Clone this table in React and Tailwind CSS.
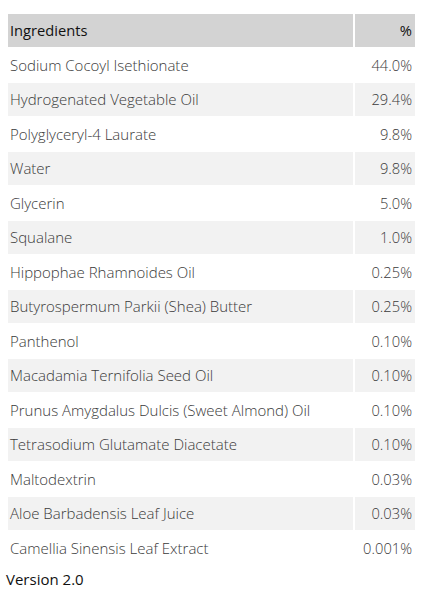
const ingredients = [
  ["Sodium Cocoyl Isethionate", "44.0%"],
  ["Hydrogenated Vegetable Oil", "29.4%"],
  ["Polyglyceryl-4 Laurate", "9.8%"],
  ["Water", "9.8%"],
  ["Glycerin", "5.0%"],
  ["Squalane", "1.0%"],
  ["Hippophae Rhamnoides Oil", "0.25%"],
  ["Butyrospermum Parkii (Shea) Butter", "0.25%"],
  ["Panthenol", "0.10%"],
  ["Macadamia Ternifolia Seed Oil", "0.10%"],
  ["Prunus Amygdalus Dulcis (Sweet Almond) Oil", "0.10%"],
  ["Tetrasodium Glutamate Diacetate", "0.10%"],
  ["Maltodextrin", "0.03%"],
  ["Aloe Barbadensis Leaf Juice", "0.03%"],
  ["Camellia Sinensis Leaf Extract", "0.001%"],
];

const App = () => {
  return (
    <div
      className="min-h-screen bg-white pt-[14px] pl-[8px] pr-[13px]"
      style={{ fontFamily: '"Open Sans", Lato, sans-serif' }}
    >
      {/* Table */}
      <div className="grid grid-cols-[345px_60px] gap-[2px] text-[14.7px]">
        <div className="h-[32.5px] flex items-center pl-[2px] bg-[#d3d3d3] text-[#111]">
          Ingredients
        </div>
        <div className="h-[32.5px] flex items-center justify-end pr-[3px] bg-[#d3d3d3] text-[#111]">
          %
        </div>

        {ingredients.map(([name, pct], i) => (
          <div key={name} className="contents">
            <div
              className={
                "h-[32.5px] flex items-center pl-[2px] font-light text-[15px] text-[#3a3a3a] " +
                (i % 2 === 1 ? "bg-[#f2f2f2]" : "bg-white")
              }
            >
              {name}
            </div>
            <div
              className={
                "h-[32.5px] flex items-center justify-end pr-[3px] font-light text-[#3a3a3a] " +
                (i % 2 === 1 ? "bg-[#f2f2f2]" : "bg-white")
              }
            >
              {pct}
            </div>
          </div>
        ))}
      </div>

      <div className="mt-[4px] -ml-[2px] text-[15px] font-medium text-[#111]">
        Version 2.0
      </div>
    </div>
  );
};

export default App;
